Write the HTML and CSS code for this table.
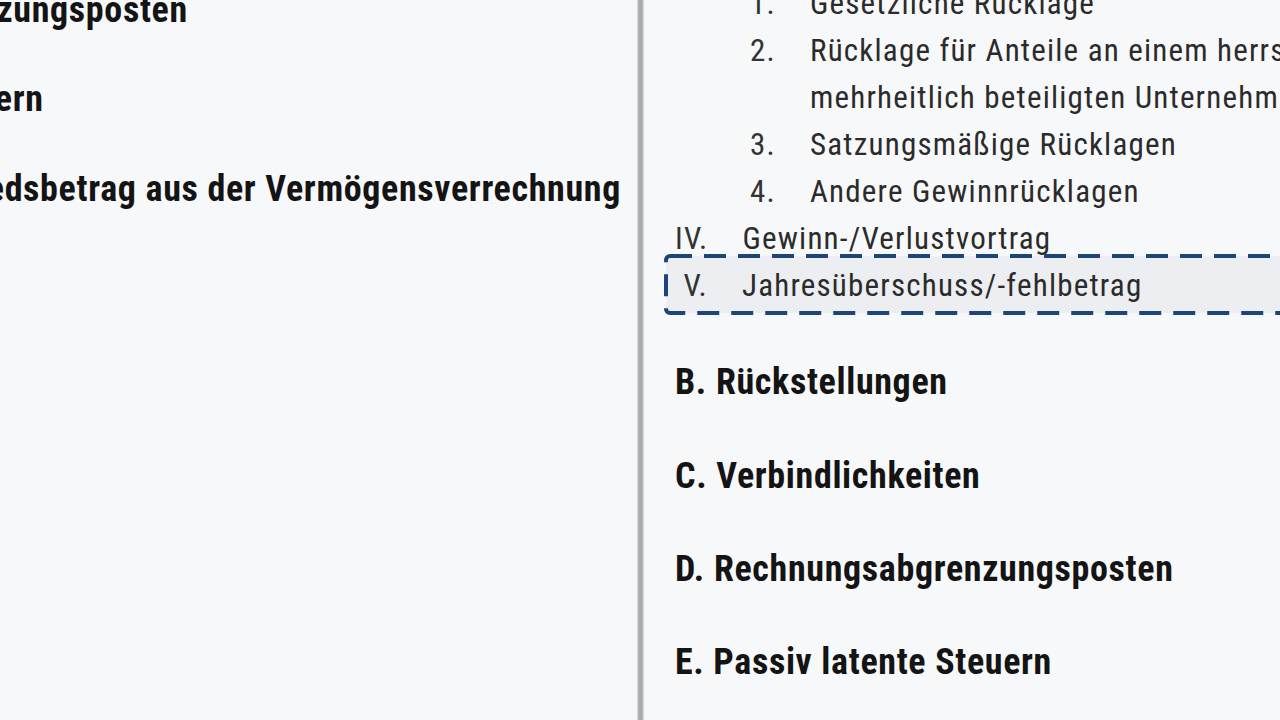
FILE: index.html
```html
<!DOCTYPE html>
<html lang="de">
<head>
<meta charset="utf-8">
<title>Bilanz</title>
<link rel="stylesheet" href="styles.css">
</head>
<body>
<div class="viewport">
  <div class="sheet">
    <section class="side aktiva">
      <div class="side-inner">
        <h2 class="group">C. Rechnungsabgrenzungsposten</h2>
        <h2 class="group">D. Aktiv latente Steuern</h2>
        <h2 class="group">E. Aktiver Unterschiedsbetrag aus der Vermögensverrechnung</h2>
      </div>
    </section>
    <div class="divider"></div>
    <section class="side passiva">
      <div class="side-inner">
        <ol class="items nested">
          <li class="row"><span class="num">1.</span><span class="label">Gesetzliche Rücklage</span></li>
          <li class="row"><span class="num">2.</span><span class="label">Rücklage für Anteile an einem herrschenden oder mehrheitlich beteiligten Unternehmen</span></li>
          <li class="row"><span class="num">3.</span><span class="label">Satzungsmäßige Rücklagen</span></li>
          <li class="row"><span class="num">4.</span><span class="label">Andere Gewinnrücklagen</span></li>
        </ol>
        <ul class="items">
          <li class="row"><span class="num">IV.</span><span class="label">Gewinn-/Verlustvortrag</span></li>
          <li class="row selected">
            <svg class="frame" aria-hidden="true"><rect width="100%" height="100%" rx="4" ry="4"></rect></svg>
            <span class="num">V.</span><span class="label">Jahresüberschuss/-fehlbetrag</span>
          </li>
        </ul>
        <div class="groups">
          <h2 class="group">B. Rückstellungen</h2>
          <h2 class="group">C. Verbindlichkeiten</h2>
          <h2 class="group">D. Rechnungsabgrenzungsposten</h2>
          <h2 class="group">E. Passiv latente Steuern</h2>
        </div>
      </div>
    </section>
  </div>
</div>
</body>
</html>
```

FILE: styles.css
```css
html, body {
  margin: 0;
  padding: 0;
  background: #f7f8fa;
}

body {
  width: 1280px;
  height: 720px;
  overflow: hidden;
  font-family: "Roboto Condensed", "Roboto", "Liberation Sans", sans-serif;
  font-stretch: 75%;
  color: #1b1b1b;
}

.viewport {
  width: 1280px;
  height: 720px;
  overflow: hidden;
}

.sheet {
  display: grid;
  grid-template-columns: 983px 7px 930px;
  margin-left: -346px;
  height: 760px;
}

.side {
  min-width: 0;
}

.aktiva .side-inner {
  margin-top: -35px;
  padding-left: 33px;
}

.aktiva .group {
  padding: 17.75px 0;
}

.passiva .side-inner {
  margin-top: -20px;
  padding-left: 31px;
}

.divider {
  background: linear-gradient(to right, #e0e1e4 0%, #a9aaac 30%, #a9aaac 70%, #e0e1e4 100%);
}

.group {
  margin: 0;
  padding: 19.5px 0;
  font-size: 36px;
  line-height: 54px;
  font-weight: 700;
  letter-spacing: 0.65px;
  color: #141414;
  white-space: nowrap;
}

.items {
  list-style: none;
  margin: 0;
  padding: 0;
}

.items.nested {
  padding-left: 68px;
}

.row {
  display: flex;
  gap: 34px;
  font-size: 31px;
  line-height: 47px;
  letter-spacing: 1.2px;
  color: #2b2b2b;
}

.num {
  flex: 0 0 33px;
  text-align: right;
  color: #333;
}

.label {
  flex: 1 1 auto;
  max-width: 760px;
}

.row.selected {
  position: relative;
  isolation: isolate;
}

.frame {
  position: absolute;
  left: -9px;
  top: -6px;
  width: 920px;
  height: 57px;
  overflow: visible;
  z-index: -1;
}

.frame rect {
  fill: #eceef1;
  stroke: #1d457a;
  stroke-width: 4;
  stroke-dasharray: 22 12;
}

.groups {
  padding-top: 26px;
}

.groups .group:first-child {
  padding-bottom: 21px;
}
```
